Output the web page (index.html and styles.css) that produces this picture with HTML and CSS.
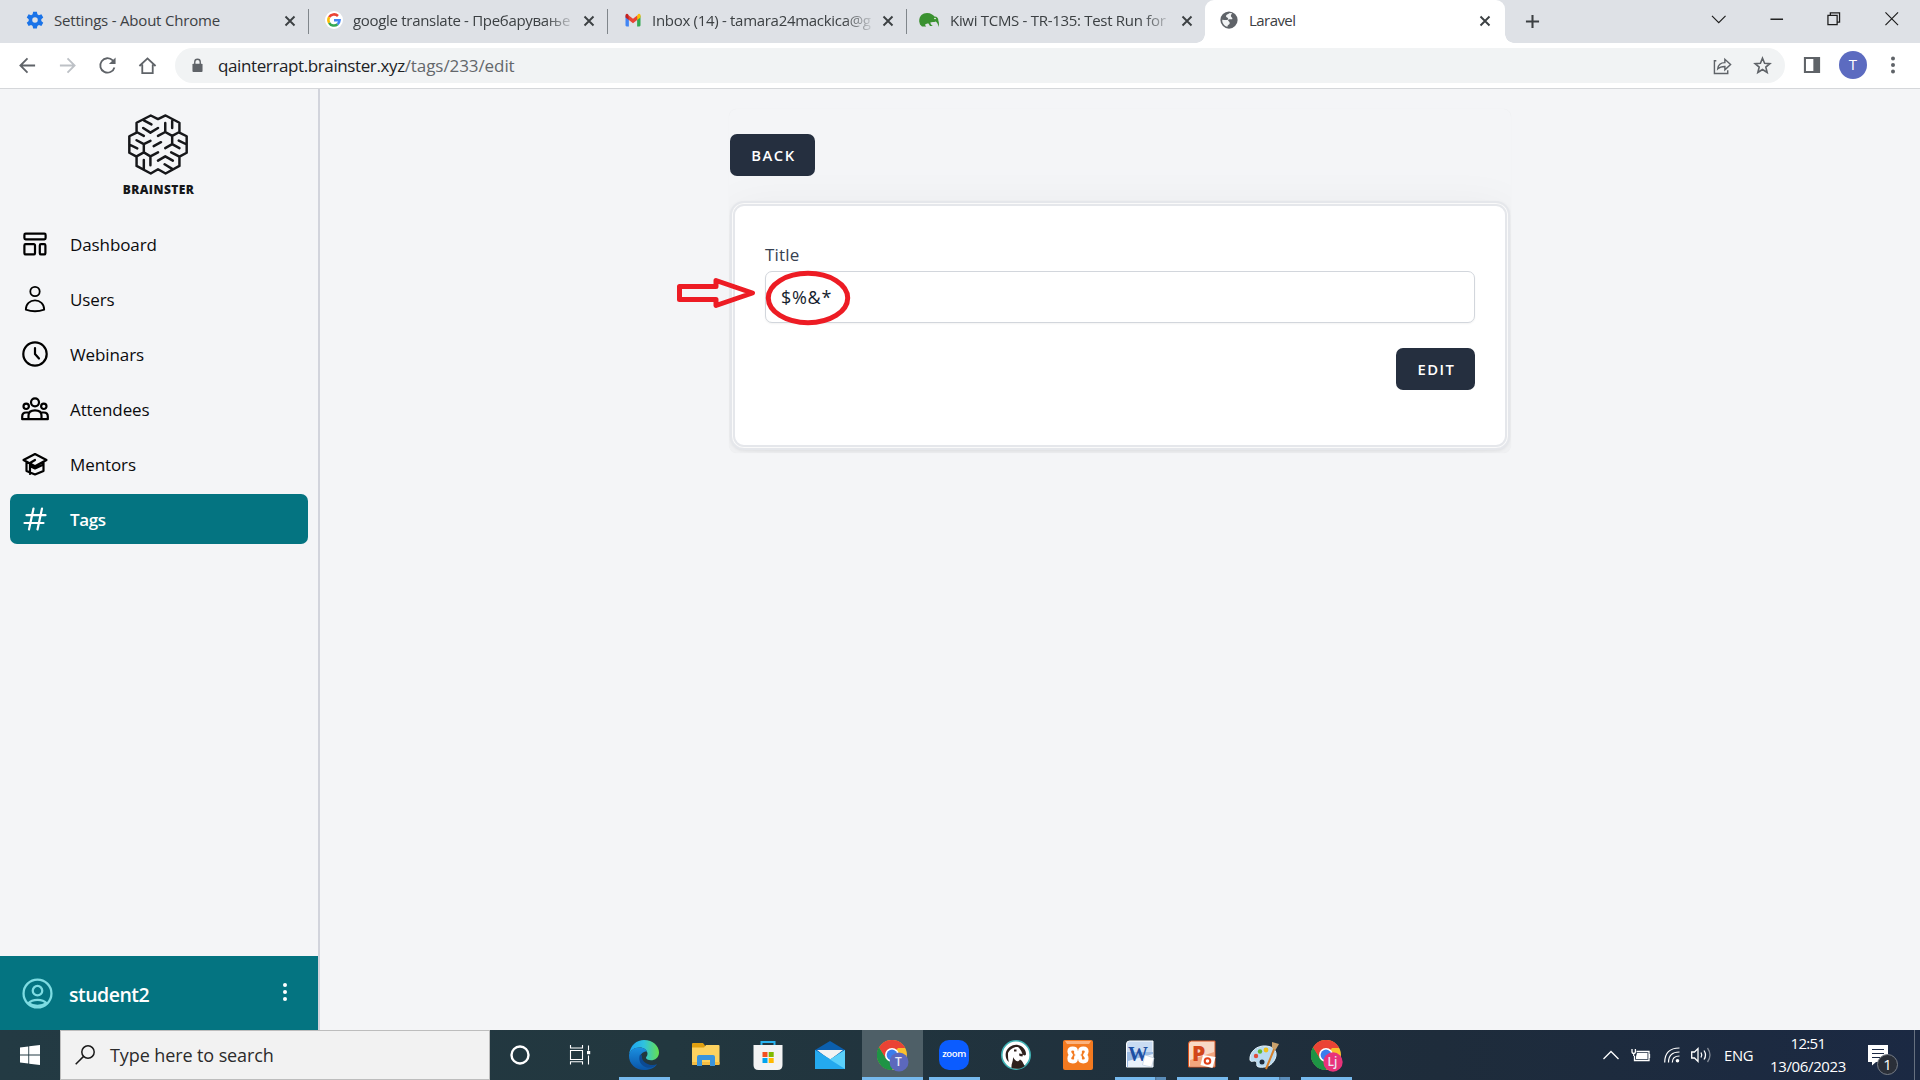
FILE: index.html
```html
<!DOCTYPE html>
<html lang="en">
<head>
<meta charset="utf-8">
<title>Laravel</title>
<link rel="stylesheet" href="styles.css">
</head>
<body>
<svg class="defs" width="0" height="0">
  <defs>
    <symbol id="x" viewBox="0 0 12 12"><path d="M1.5 1.5l9 9M10.5 1.5l-9 9" stroke="#3c4043" stroke-width="1.9" fill="none"/></symbol>
    <symbol id="chrome" viewBox="-15 -15 30 30">
      <circle r="15" fill="#fbc02d"/>
      <path d="M0 0L-13-7.5A15 15 0 0 1 13-7.5L13-7H0z" fill="#ea4335"/>
      <path d="M-13-7.5A15 15 0 0 0 0 15L6.2 3.5 0 0-6 3.5z" fill="#1e9445"/>
      <path d="M-13-7.5L-6 4 0 0 6-7z" fill="#ea4335"/>
      <path d="M-13-7.5A15 15 0 0 0 0 15L6 4H-6z" fill="#1e9445"/>
      <circle r="7" fill="#fff"/><circle r="5.4" fill="#3b7ded"/>
    </symbol>
  </defs>
</svg>

<header class="tabs">
  <div class="tab">
    <svg class="fav" viewBox="0 0 24 24"><path fill="#1a73e8" fill-rule="evenodd" d="M9.5 1h5l.7 3.4 2 1.1 3.300-1.100 2.500 4.300-2.600 2.300v2.300l2.600 2.300-2.500 4.300-3.300-1.100-2 1.100-.7 3.400h-5l-.7-3.400-2-1.100-3.300 1.100L1 15.600l2.600-2.300V11L1 8.700l2.500-4.300 3.300 1.100 2-1.100zM12 8.300a3.700 3.700 0 1 0 0 7.400 3.700 3.700 0 0 0 0-7.400z"/></svg>
    <span class="name t1">Settings - About Chrome</span><svg class="close"><use href="#x"/></svg>
  </div>
  <div class="tab">
    <svg class="fav" viewBox="0 0 24 24"><circle cx="12" cy="12" r="12" fill="#fff"/><g fill="none" stroke-width="3.400"><path d="M17.300 6.700A7.500 7.500 0 0 0 5.500 8.300" stroke="#ea4335"/><path d="M5.500 8.300a7.500 7.500 0 0 0 0 7.400" stroke="#fbbc05"/><path d="M5.500 15.700a7.500 7.500 0 0 0 11.300 2" stroke="#34a853"/><path d="M16.800 17.700a7.500 7.500 0 0 0 2.600-5.300H12" stroke="#4285f4"/></g></svg>
    <span class="name fade t2">google translate - Пребарување</span><svg class="close"><use href="#x"/></svg>
  </div>
  <div class="tab">
    <svg class="fav" viewBox="0 0 24 24"><path d="M2 6v13q0 1.500 1.500 1.500H6.500V8z" fill="#4285f4"/><path d="M22 6v13q0 1.500-1.500 1.500h-3V8z" fill="#34a853"/><path d="M17.500 6l1.500-2q3-1 3 2v2.500l-4.500 3.500z" fill="#fbbc04"/><path d="M6.500 6L5 4Q2 3 2 6v2.500L6.500 12z" fill="#c5221f"/><path d="M6.500 6v6l5.500 4.200 5.500-4.200V6L12 10.200z" fill="#ea4335"/></svg>
    <span class="name fade t3">Inbox (14) - tamara24mackica@g</span><svg class="close"><use href="#x"/></svg>
  </div>
  <div class="tab">
    <svg class="fav kiwi" viewBox="0 0 20 20"><path d="M.2 11.500C0 6 3.500 3 8 3c4 0 6 2 7.500 3.500 3 .2 4 2 3.800 4 .7 1.500.8 4 .5 6.500-.7-2.500-1.500-4.500-3-5.500-2 .8-4 .5-5.500 1 .2 1.500 1.200 2.500 2.500 3.500H11L9.500 13.500C7.500 13.500 6.500 14 6 15l1.200 1.500H3L1 14.500z" fill="#3a9130"/><circle cx="16" cy="8.500" r=".8" fill="#fff"/></svg>
    <span class="name fade t4">Kiwi TCMS - TR-135: Test Run for</span><svg class="close"><use href="#x"/></svg>
  </div>
  <div class="tab active">
    <svg class="fav" viewBox="0 0 24 24"><circle cx="12" cy="12" r="11.500" fill="#5f6368"/><path d="M13 2.500c-3 2-5 2-5 4.500 0 2 3 1.500 3 3.500S7 12 3 11.500C2.500 16 6 20 10 21c0-3 3-2.500 3-5s-3-2-2-4 5 0 5.500-1.500S14 8 14.500 6s2-2 1.500-3z" fill="#f1f3f4"/></svg>
    <span class="name t5">Laravel</span><svg class="close"><use href="#x"/></svg>
  </div>
  <svg class="plus" viewBox="0 0 16 16"><path d="M8 1v14M1 8h14" stroke="#3c4043" stroke-width="2.200"/></svg>
  <div class="winctl">
    <svg viewBox="0 0 16 16"><path d="M1 5l7 7 7-7"/></svg>
    <svg viewBox="0 0 16 16"><path d="M1.500 8.500h13" stroke-width="1.500"/></svg>
    <svg viewBox="0 0 16 16"><path d="M2 4.500h9.500v9.500H2zM4.500 4.500V2H14v9.500h-2.500" stroke-width="1.300"/></svg>
    <svg viewBox="0 0 16 16"><path d="M1.500 1.500l13 13M14.500 1.500l-13 13"/></svg>
  </div>
</header>

<div class="toolbar">
  <svg class="tb" viewBox="0 0 20 20"><path d="M18 10H3M10 2.500L2.500 10l7.500 7.500"/></svg>
  <svg class="tb off" viewBox="0 0 20 20"><path d="M2 10h15M10 2.500l7.500 7.500-7.500 7.500"/></svg>
  <svg class="tb" viewBox="0 0 20 20"><path d="M17.300 12A7.600 7.600 0 1 1 15.500 4.700L17 6.500"/><path d="M18.500 1.500V8.500H11.500z" fill="#5f6368" stroke="none"/></svg>
  <svg class="tb" viewBox="0 0 20 20"><path d="M4.500 9v9h11V9M1.500 10.500L10 2.500l8.500 8"/></svg>
  <div class="omni">
    <svg class="lock" viewBox="0 0 12 16"><rect x=".5" y="6" width="11" height="9" rx="1" fill="#5f6368"/><path d="M3 6.500V4.200a3 3 0 0 1 6 0v2.300" fill="none" stroke="#5f6368" stroke-width="1.500"/></svg>
    <span class="url"><b>qainterrapt.brainster.xyz</b><i>/tags/233/edit</i></span>
    <svg class="oi" viewBox="0 0 20 20"><path d="M3.500 5H1.500v13.500h14V15M5 13.500c.5-4.500 3-6.500 7.500-6.500V3.500L18.500 9l-6 5.500V11c-3.500 0-5.500.5-7.500 2.500z" stroke-width="1.500"/></svg>
    <svg class="oi" viewBox="0 0 20 20"><path d="M10 2.300l2.200 5.300 5.600.4-4.300 3.700 1.400 5.600L10 14.200l-4.900 3.100 1.400-5.600L2.200 8l5.600-.4z" stroke-width="1.700"/></svg>
  </div>
  <svg class="panel" viewBox="0 0 20 20"><path d="M1 1h18v18H1zM3.300 3.300v13.400h8.200V3.300z" fill="#5f6368" fill-rule="evenodd"/></svg>
  <span class="avatar">T</span>
  <svg class="more" viewBox="0 0 4 18"><g fill="#5f6368"><circle cx="2" cy="2.500" r="2"/><circle cx="2" cy="9" r="2"/><circle cx="2" cy="15.500" r="2"/></g></svg>
</div>

<main class="page">
  <aside class="side">
    <div class="logo">
      <svg viewBox="384 71 182 184"><path d="M453 75L475 86 498 75 540 97V127L562 138V188L540 200V228L498 251 475 238 453 251 410 228V200L388 188V138L410 127V97ZM432 90L455 102M430 113L452 127 475 113M410 125L432 137M497 98V125L475 137M497 125L518 137 540 125M518 92V113M518 137V162L497 174M518 162L540 174M538 151L562 163M462 168L484 156M410 150L432 162 452 152M432 162V187L410 199M432 187L452 199 475 187M452 199V226M388 163L412 175M432 210V238M475 212L497 199 520 212M515 187L540 200M495 223L518 237"/></svg>
      <span>BRAINSTER</span>
    </div>
    <nav>
      <a><svg viewBox="-14 -14 28 28"><rect x="-10.600" y="-10.300" width="21.200" height="5.600" rx="1.200"/><rect x="-10.600" y="0.200" width="10.600" height="10.200" rx="1.200"/><rect x="4.800" y="0.200" width="5.600" height="10.200" rx="1.200"/></svg>Dashboard</a>
      <a><svg viewBox="-14 -14 28 28" class="thin"><circle cy="-7.500" r="4.700"/><path d="M-9.200 10.700C-9.200 5 -5 1.300 0 1.300S9.200 5 9.200 10.700Q0 13.800 -9.200 10.700z"/></svg>Users</a>
      <a><svg viewBox="-14 -14 28 28"><circle r="11.700"/><path d="M0-6V0L4 4.500"/></svg>Webinars</a>
      <a><svg viewBox="-14 -14 28 28"><circle cy="-6.700" r="4"/><circle cx="-8.800" cy="-2.700" r="2.700"/><circle cx="8.800" cy="-2.700" r="2.700"/><path d="M-12.800 10.200V7.500Q-12.800 3.500-8.800 3.500H-5.500M12.800 10.200V7.500Q12.800 3.500 8.800 3.500H5.500M-12.800 10.200H12.800M-6.500 10V6.500Q-6.500 1.300 0 1.300T6.500 6.500V10"/></svg>Attendees</a>
      <a><svg viewBox="-14 -14 28 28"><path d="M-11.500-4L0-10 11.500-4 0 2.200ZM-8.500-2V7L0 10.500 8.500 7V-2M0-4L-5-1V10M-5 2L0 4.500 8.500.5"/></svg>Mentors</a>
      <a class="on"><svg viewBox="-14 -14 28 28"><path d="M-1.500-10.500L-6 10.500M7-10.500L2.500 10.500M-8.500-3.800H10.500M-10.500 4H8.500"/></svg>Tags</a>
    </nav>
    <footer class="user">
      <svg viewBox="-15 -15 30 30"><circle r="13.500"/><circle cy="-2.700" r="4.600"/><path d="M-8.800 9.500Q-6 6.200 0 6.200T8.800 9.500Q5 12 0 12T-8.800 9.500"/></svg>
      <span>student2</span>
      <svg class="dots" viewBox="0 0 4 18"><circle cx="2" cy="2" r="2"/><circle cx="2" cy="9" r="2"/><circle cx="2" cy="16" r="2"/></svg>
    </footer>
  </aside>
  <section class="content">
    <div class="wrap">
      <button class="btn">BACK</button>
      <form class="card">
        <label for="title">Title</label>
        <input id="title" value="$%&amp;*">
        <button type="button" class="btn edit">EDIT</button>
      </form>
    </div>
    <svg class="mark" viewBox="677 270 174 56"><path d="M679.500 286.500H716V280.500L752.500 293 716 305.500V299.500H679.500Z"/><ellipse cx="808" cy="298" rx="39.700" ry="24.700"/></svg>
  </section>
</main>

<div class="taskbar">
  <div class="start"><svg viewBox="0 0 20 20"><path fill="#fff" d="M0 2.600l8.300-1.200v8.100H0zM9.200 1.300L20 0v9.500H9.200zM0 10.500h8.300v8.100L0 17.400zM9.200 10.500H20V20L9.200 18.700z"/></svg></div>
  <div class="search">
    <svg viewBox="0 0 20 20"><circle cx="13" cy="7" r="6.200"/><path d="M8.600 11.400L.7 19.300"/></svg>
    <span>Type here to search</span>
  </div>
  <div class="apps">
    <div><svg viewBox="-15 -15 30 30"><circle r="8.500" fill="none" stroke="#fff" stroke-width="2.400"/></svg></div>
    <div class="tv"><svg viewBox="-15 -15 30 30"><path d="M-9.500-10v3H2.500v-3M-9.500-4.500h12v9h-12zM-9.500 9.500V6.700H2.500V9.500M8.500-9.500v5M8.500.5v9" fill="none" stroke="#fff" stroke-width="1.100"/><rect x="7" y="-4" width="3.200" height="3.200" fill="#fff"/></svg></div>
    <div class="run"><svg viewBox="0 0 30 30"><defs><linearGradient id="e1" x1="0" x2="1"><stop offset="0" stop-color="#1ca0f2"/><stop offset=".5" stop-color="#2fc2df"/><stop offset="1" stop-color="#66e04e"/></linearGradient><linearGradient id="e2" y2="1" x2="0"><stop offset="0" stop-color="#1b8fe0"/><stop offset="1" stop-color="#0a55a8"/></linearGradient></defs><path d="M0 15C1 5 8 0 15 0c9 0 15 6 15 12.500 0 5-4 7.800-8 7.800-3 0-5-1.300-5-2.500 0-1 1.500-1.500 1.500-4C18.500 10 15 7.500 10.500 7.500 5 7.500 1 11 0 15z" fill="url(#e1)"/><path d="M0 15C1 10.500 5 7.500 10.500 7.500c3.500 0 6.500 1.500 7.600 4C15 11 11 13.500 11 18c0 6 6 9 11 8.500 3-.3 4.500-1.200 6-2.200C25 28.500 20 30 15 30 7 30-.5 24 0 15z" fill="url(#e2)"/><path d="M11 14.500c-2 5 0 11 6.500 13 5 1 8-1 10.500-3.200-2.500.8-5 1.200-8 .2-5-1.500-7.500-5-7-9z" fill="#0c4a94"/></svg></div>
    <div><svg viewBox="0 0 30 30"><path d="M1 4q0-1 1-1h10l2 2.500V8H1z" fill="#e0a010"/><path d="M1 7.500h12l2-2.500h12.500q1 0 1 1v18q0 1-1 1H2q-1 0-1-1z" fill="#fdd25f"/><path d="M1 22h27.500v2q0 1-1 1H2q-1 0-1-1z" fill="#f5bd42"/><path d="M6 26V17q0-2 2-2h14q2 0 2 2v9h-5v-6h-8v6z" fill="#3a94dc"/></svg></div>
    <div><svg viewBox="0 0 30 30"><path d="M8.500 6V2h13v4" fill="none" stroke="#29b3f0" stroke-width="2"/><path d="M.5 5h29v20q0 5-5 5H5.500q-5 0-5-5z" fill="#f3f3f3"/><path d="M9.500 12h5v5h-5z" fill="#f25022"/><path d="M15.700 12h5v5h-5z" fill="#7fba00"/><path d="M9.500 18h5v5h-5z" fill="#00a4ef"/><path d="M15.700 18h5v5h-5z" fill="#ffb900"/></svg></div>
    <div><svg viewBox="0 0 30 30"><path d="M0 10L15 1l15 9v5H0z" fill="#0b5fae"/><path d="M2 10h26L15 20z" fill="#f3f3f3"/><path d="M0 10l15 9-15 10z" fill="#2aa7ea"/><path d="M0 10l15 9.500L30 10v19H0z" fill="#24a9ee"/><path d="M30 10v19L15 19.500z" fill="#5bd0fa"/></svg></div>
    <div class="run cur"><svg viewBox="0 0 30 30"><use href="#chrome" width="30" height="30"/><circle cx="22" cy="22" r="9.500" fill="#5c68bd"/></svg><span class="bdg">T</span></div>
    <div class="run"><span class="zoom">zoom</span></div>
    <div><svg viewBox="-15 -15 30 30"><circle r="14.200" fill="#fff" stroke="#3fb2b4" stroke-width="1.600"/><path d="M-10-3C-8-8-3-11 2-10 7-9 10-5 10-1 10 1 7 1 6-2 5-5 4-6 2-8-2-8.500-6-6-8-2-8 2-8 5-7 7-10 5-11 1-10-3zM-2-5.500h2.500v2H-2zM3-1.500l4 .5-.5 2.500-3-.5zM-3 2C-2.500 6-5 9-4.500 13 0 14.500 5 14 9 11 7 9 7 6 4 4.500 2 8-1 6-3 2z" fill="#2e211d"/></svg></div>
    <div><svg viewBox="0 0 30 30"><rect width="30" height="30" rx="2" fill="#f37a20"/><path d="M2 1h26l-2 3H4z" fill="#fbb27d"/><path d="M13 13V11Q13 8.500 9.700 8.500T6.300 11.500Q6.300 13.500 8 15 6.300 16.500 6.300 18.500 6.300 21.500 9.700 21.500T13 19V17H17V19Q17 21.500 20.300 21.500T23.700 18.500Q23.700 16.500 22 15 23.700 13.500 23.700 11.500 23.700 8.500 20.300 8.500T17 11V13Z" fill="none" stroke="#fff" stroke-width="3.800" stroke-linejoin="round"/><path d="M13 13h4v4h-4z" fill="#fff"/></svg></div>
    <div class="run dbl"><svg viewBox="0 0 30 30"><path d="M1.500 4q0-3 3-3H28v26H1.500z" fill="#c9dbf2" stroke="#fff"/><path d="M2 12h26v15H2z" fill="#9bbbe4"/><path d="M3 21l25-7v13H3z" fill="#e8f1fb"/><text x="3" y="21" class="word">W</text><path d="M20 15l9 3-2.500 9-9-2z" fill="#fff" stroke="#bbc9dc" stroke-width=".6"/></svg></div>
    <div class="run"><svg viewBox="0 0 30 30"><path d="M1.500 4q0-3 3-3H28v26H1.500z" fill="#f8d9c6" stroke="#d9531e" stroke-width="1"/><path d="M3 20l24-8v14H3z" fill="#f3a67e"/><text x="5" y="21" class="ppt">P</text><path d="M16 15l12.500 2-3 11-12-3z" fill="#fff"/><circle cx="20.500" cy="21" r="2.800" fill="none" stroke="#e2421a" stroke-width="2"/></svg></div>
    <div class="run dbl"><svg viewBox="0 0 30 30"><path d="M1 20C0 12 8 5 17 6c9 .5 12 7 9 13-3 7-10 9-16 8-4-.5-1-4-3-5.500C5 20 2 23 1 20z" fill="#b9daf0" stroke="#e6f4fc"/><circle cx="7" cy="16" r="2.200" fill="#e14c3c"/><circle cx="11" cy="11.500" r="2.200" fill="#5fb836"/><circle cx="17" cy="10" r="2.400" fill="#f0c01c"/><circle cx="13" cy="22" r="2.500" fill="#1e2c3c"/><path d="M26 7L17 29" stroke="#d8802a" stroke-width="2"/><path d="M23 2l7 2-3.500 6-3.500-2z" fill="#c9a16c"/></svg></div>
    <div class="run"><svg viewBox="0 0 30 30"><use href="#chrome" width="30" height="30"/><circle cx="22" cy="22" r="9.700" fill="#e8337a"/></svg><span class="bdg">Lj</span></div>
  </div>
  <div class="tray">
    <svg class="chev" viewBox="0 0 16 10"><path d="M.5 9L8 1.500 15.500 9"/></svg>
    <svg class="bat" viewBox="0 0 20 14"><path d="M5.500 3.500H18v9H3.500V8M18.500 6v4M1 1v2.500q0 2 1.700 2T4.400 3.500V1M2.700 5.500V8"/><path d="M6 5h10.500v6H5V8.500z" fill="#fff" stroke="none"/></svg>
    <svg class="wifi" viewBox="0 0 16 16"><path d="M.7 15.500Q.7 1 15.500 1M4.500 15.500Q4.500 5 15.500 5M8.300 15.500Q8.300 9 15.500 9" stroke-width="1.200"/><circle cx="13.500" cy="13.700" r="1.800" fill="#fff" stroke="none"/></svg>
    <svg class="vol" viewBox="0 0 20 18"><path d="M.7 6H3.500L7 2.500v13L3.500 12H.7zM10 6.500q1.500 2.500 0 5M13 4.500q3 4.500 0 9"/><path d="M16.500 2q5 7 0 14" opacity=".45"/></svg>
    <span class="eng">ENG</span>
    <div class="clock"><span class="time">12:51</span><span>13/06/2023</span></div>
    <div class="note"><svg viewBox="0 0 20 20"><path d="M0 0h20v17H8l-4 3.500V17H0z" fill="#fff"/><path d="M4 4.500h12M4 8.500h12M4 12.500h8" stroke="#1b2944" stroke-width="1.200"/></svg><span>1</span></div>
    <div class="desk"></div>
  </div>
</div>
</body>
</html>
```
FILE: styles.css
```css
*{box-sizing:border-box}
body{margin:0;width:1920px;height:1080px;overflow:hidden;display:flex;flex-direction:column;font-family:"Open Sans","Noto Sans",sans-serif;background:#f4f5f7}
svg{display:block;flex:none}
.defs{position:absolute}

/* browser tabs */
.tabs{height:43px;background:#dee1e6;display:flex;padding-left:10px;flex:none}
.tab{width:299px;height:43px;display:flex;align-items:center;padding:0 12px 3px 16px;position:relative;font-size:15px;color:#3c4043}
.tab:not(.active)::after{content:"";position:absolute;right:0;top:9px;width:1px;height:25px;background:#80868b}
.tab:nth-child(4)::after{display:none}
.fav{width:18px;height:18px;margin-right:10px}
.kiwi{width:20px;height:20px;margin:0 8px 0 -4px}
.tab:nth-child(4) .name{margin-left:3px}
.name{width:221px;white-space:nowrap;overflow:hidden;line-height:24px}
.fade{-webkit-mask-image:linear-gradient(90deg,#000 192px,transparent 224px);mask-image:linear-gradient(90deg,#000 192px,transparent 224px)}
.t1{letter-spacing:-.2px}
.t2{letter-spacing:-.31px}
.t3{letter-spacing:-.3px}
.t4{letter-spacing:-.3px}
.t5{letter-spacing:-.55px}
.close{width:12px;height:12px;margin-left:auto}
.tab .close{position:relative;left:-1px;top:1px}
.active{background:#fff;border-radius:9px 9px 0 0;padding-left:15px;left:-1px;width:300px}
.active .fav{margin-right:11px}
.active::before,.active::after{content:"";position:absolute;bottom:0;width:9px;height:9px}
.active::before{left:-9px;background:radial-gradient(circle at 0 0,transparent 8.5px,#fff 9px)}
.active::after{right:-9px;background:radial-gradient(circle at 100% 0,transparent 8.5px,#fff 9px)}
.active .close{left:-2px}
.plus{width:15px;height:15px;margin:14px 0 0 19px}
.winctl{margin-left:auto;display:flex;gap:42px;padding:11px 21px 0 0}
.winctl svg{width:15.500px;height:15.500px;fill:none;stroke:#1c1c1c;stroke-width:1.200}

/* browser toolbar */
.toolbar{height:46px;flex:none;background:#fff;border-bottom:1px solid #d5d7da;display:flex;align-items:center;padding:0 25px 1px 18px}
.tb{width:19px;height:19px;margin-right:21px;fill:none;stroke:#5f6368;stroke-width:1.900}
.off{stroke:#bdc1c6}
.omni{width:1610px;height:35px;margin-left:-3px;border-radius:18px;background:#f1f3f4;display:flex;align-items:center;padding:0 13px 0 17px}
.lock{width:11px;height:15px}
.url{margin:1px auto 0 15px;font-size:17px;line-height:24px;color:#63676b}
.url b{font-weight:400;letter-spacing:-.39px;color:#202124}
.url i{font-style:normal;letter-spacing:-.08px}
.oi{width:19px;height:19px;margin-left:21px;fill:none;stroke:#5f6368}
.panel{width:18px;height:18px;margin-left:18px}
.avatar{width:28px;height:28px;border-radius:50%;background:#5c6bc0;color:#fff;font-size:15px;line-height:27px;text-align:center;margin-left:18px}
.more{width:4px;height:18px;margin-left:auto}

/* page */
.page{height:941px;flex:none;display:flex}
.side{width:320px;border-right:2px solid #d2d4dc;display:flex;flex-direction:column}
.logo{padding:25px 0 0;height:130px;width:316px;display:flex;flex-direction:column;align-items:center;color:#16171a}
.logo svg{width:60px;height:61px;fill:none;stroke:#16171a;stroke-width:7.500;stroke-linejoin:round;stroke-linecap:round}
.logo span{font-size:12px;font-weight:800;letter-spacing:.42px;line-height:16px;margin-top:7px;margin-left:1px}
nav{display:flex;flex-direction:column;gap:5px;padding:0 10px}
nav a{height:50px;border-radius:7px;display:flex;align-items:center;padding-left:11px;font-size:17px;letter-spacing:-.1px;color:#0b0b0d}
nav svg{width:28px;height:28px;margin-right:21px;fill:none;stroke:#000;stroke-width:2.200;stroke-linecap:round;stroke-linejoin:round}
nav .thin{stroke-width:1.800}
nav .on{background:#047481;color:#fff;font-weight:600;letter-spacing:-.4px}
nav .on svg{stroke:#fff}
.user{height:74px;margin-top:auto;width:318px;background:#047481;display:flex;align-items:center;padding:0 31px 0 22px;color:#fff;font-size:19.500px;font-weight:600;letter-spacing:-.5px}
.user svg{width:31px;height:31px;fill:none;stroke:#7edce2;stroke-width:2.200}
.user span{margin-left:16px;margin-top:2px}
.user .dots{width:4px;height:18px;margin:-3px 0 0 auto;fill:#fff;stroke:none}
.content{flex:1;position:relative;padding:20px 0 0 409px}
.wrap{width:782px;height:344px;padding:25px 1px 0;border-radius:8px;overflow:hidden;box-shadow:0 0 1px rgba(0,0,0,.06)}
.btn{display:block;height:42px;border:0;border-radius:7px;background:#252f3f;color:#fff;font:600 14.800px/42px "Open Sans",sans-serif;letter-spacing:1.500px;padding:0 18px 0 20px;width:85px}
.card{margin:25px 0 0;width:780px;height:249px;background:#fff;border:2px solid #e5e7eb;border-radius:14px;padding:39px 33px 0;box-shadow:inset 0 0 0 1px #fafafa,inset 0 0 0 3px #e5e7eb,0 1px 3px rgba(0,0,0,.06),0 10px 50px rgba(0,0,0,.06);display:flex;flex-direction:column}
.card label{font-size:17px;line-height:25px;letter-spacing:.2px;font-weight:500;color:#374151}
.card input{height:52px;margin-top:4px;border:1px solid #d2d6dc;border-radius:7px;padding:0 15px;background:#fff;box-shadow:0 1px 2px rgba(0,0,0,.05);font:18px "Open Sans",sans-serif;letter-spacing:.7px;color:#161e2e;outline:0}
.edit{width:79px;margin:25px 0 0 auto}
.mark{position:absolute;left:357px;top:181px;width:174px;height:56px;fill:none;stroke:#ed1c24;stroke-width:5;stroke-linejoin:round}

/* taskbar */
.taskbar{height:50px;flex:none;display:flex;background:linear-gradient(90deg,#233a43,#22373f 35%,#1e2c3b 75%,#1b2943)}
.start{width:60px;padding:15px 0 0 20px}
.start svg{width:20px;height:20px}
.search{width:430px;background:#f2f2f2;border:1px solid #bdbdbd;display:flex;align-items:center;padding-left:14px;font-size:18px;letter-spacing:-.1px;color:#2b2b2b}
.search svg{width:20px;height:20px;fill:none;stroke:#1a1a1a;stroke-width:1.500;margin-right:15px}
.search span{padding-bottom:1px}
.apps{display:flex;margin-left:-1px}
.apps>div{width:62px;height:50px;display:flex;align-items:center;justify-content:center;position:relative;flex:none}
.apps .tv{padding-right:4px}
.apps svg{width:30px;height:30px;overflow:visible}
.run::after{content:"";position:absolute;left:6px;bottom:0;width:51px;height:3px;background:#76b9ed}
.dbl::after{background:linear-gradient(90deg,#76b9ed 40px,#4c6f8f 40px,#5a8cb8 42px)}
.cur{background:linear-gradient(90deg,transparent 1px,#4e5f67 1px)}
.cur::after{left:1px;width:61px}
.bdg{position:absolute;left:28px;top:22px;width:19px;height:19px;text-align:center;color:#e9e9f5;font:600 12px/19px "Open Sans",sans-serif}
.zoom{width:30px;height:30px;border-radius:10px;background:#0b5cff;color:#fff;font:600 9.500px/28px "Open Sans",sans-serif;text-align:center;letter-spacing:-.4px}
.word{font:900 20px "Liberation Serif",serif;fill:#1d4fa3}
.ppt{font:800 21px "Open Sans",sans-serif;fill:#d2461a}
.tray{margin-left:auto;display:flex;align-items:center;color:#fff;font-size:15px}
.tray svg{fill:none;stroke:#fff;stroke-width:1.300}
.chev{width:16px;height:10px;margin-right:12px}
.bat{width:20px;height:14px;margin-right:13px}
.wifi{width:16px;height:16px;margin-right:11px}
.vol{width:20px;height:18px;margin-right:13px}
.eng{font-size:14.800px;letter-spacing:-.4px;margin-right:17px}
.clock{display:flex;flex-direction:column;align-items:center;line-height:23px;letter-spacing:-.36px;margin-right:22px;padding-bottom:1px}
.time{letter-spacing:-.7px}
.note{position:relative;width:20px;height:20px;margin-right:26px}
.note svg{width:20px;height:20px;stroke:none;overflow:visible}
.note span{position:absolute;left:9px;top:9px;width:21px;height:21px;border-radius:50%;background:#2a2f38;border:1px solid #777d86;text-align:center;font-size:15px;line-height:18px}
.desk{width:6px;height:50px;border-left:1px solid #66707f}
```
